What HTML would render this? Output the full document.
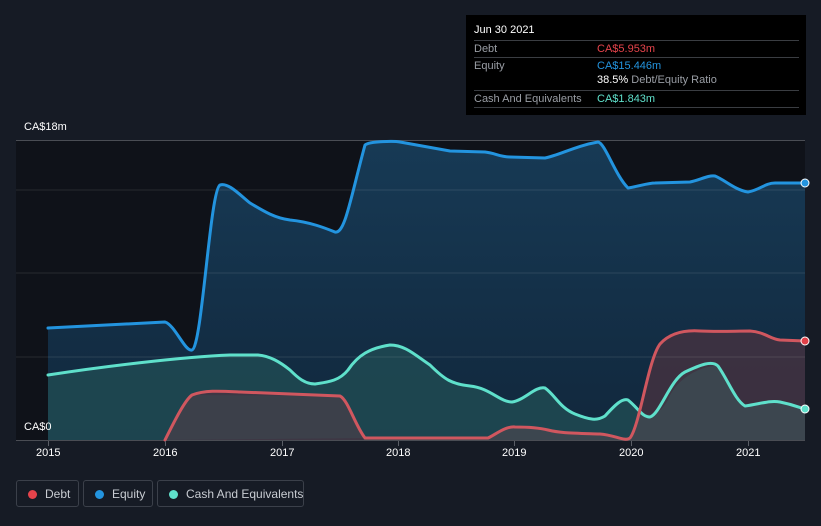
<!DOCTYPE html>
<html><head><meta charset="utf-8"><style>
body{margin:0;width:821px;height:526px;background:#161b25;font-family:"Liberation Sans",sans-serif;overflow:hidden;position:relative}
.t{position:absolute;color:#fff;font-size:11px}
.tip{position:absolute;left:466px;top:15px;width:340px;height:100px;background:#000;}
.row{position:absolute;left:8px;width:325px;border-top:1px solid #3a3d42;font-size:11px;color:#9a9ea5;white-space:nowrap}
.row span{position:absolute;left:123px}
.leg{position:absolute;top:480px;height:27px;border:1px solid #3b404a;border-radius:3px;color:#c8ccd2;font-size:12px;line-height:26px;box-sizing:border-box;white-space:nowrap}
.leg i{position:absolute;left:11px;top:9px;width:9px;height:9px;border-radius:50%}
</style></head><body>
<svg width="821" height="526" style="position:absolute;left:0;top:0">
<defs>
<linearGradient id="eg" x1="0" y1="0" x2="0" y2="1"><stop offset="0" stop-color="#173a55"/><stop offset="1" stop-color="#11273c"/></linearGradient>
</defs>
<rect x="16" y="141" width="789" height="299" fill="#0f1219"/>
<path d="M48,328 L165,322 C175,325 185,352 192,350 C202,348 210,190 220,185 C228,182 240,195 250,203 C265,212 275,218 290,220 C310,222 325,228 335,232 C345,234 350,200 365,145 C370,141 395,141 400,142 L450,151 L485,152 C495,153 500,157 510,157 L545,158 C560,155 575,146 598,142 C605,143 615,175 628,188 C640,186 648,183 655,183 L690,182 C700,180 708,175 715,176 C725,180 735,190 748,192 C760,190 765,183 775,183 L805,183 L805,440 L48,440Z" fill="url(#eg)"/>
<path d="M48,375 C100,367 180,357 230,355 L258,355 C270,356 280,362 290,370 C298,378 305,384 315,384 C330,382 340,380 348,370 C358,355 370,348 390,345 C405,345 415,355 430,365 C445,380 452,384 470,386 C490,388 500,402 512,402 C525,400 535,386 545,388 C555,395 560,408 575,414 C590,420 597,421 605,416 C615,405 622,398 628,400 C638,408 642,417 650,417 C660,414 670,380 685,372 C700,365 712,360 718,366 C728,380 735,400 745,406 C760,404 770,400 780,402 C795,405 800,408 805,409 L805,440 L48,440Z" fill="#204a52" fill-opacity="0.85"/>
<path d="M165,440 C175,420 185,400 192,395 C205,390 220,391 240,392 L340,396 C348,400 355,425 365,438 L488,438 C495,435 505,426 515,427 C530,427 540,428 548,430 C560,433 570,433 600,434 C615,435 625,442 630,438 C640,425 648,360 660,344 C670,333 685,330 700,331 C720,332 735,331 750,331 C765,332 770,339 780,340 L805,341 L805,440 Z" fill="#4a3340" fill-opacity="0.75"/>
<path d="M363,440 L365,438 L488,438 C495,435 505,426 515,427 C530,427 540,428 548,430 C560,433 570,433 600,434 C615,435 625,442 630,438 L640,412 C650,418 660,414 668,400 C675,380 700,365 718,366 C728,380 735,400 745,406 C760,404 770,400 780,402 L805,409 L805,440Z" fill="#3c4a52" fill-opacity="0.8"/>
<path d="M165,440 L190,395 L340,396 L365,438 Z" fill="#3c424c" fill-opacity="0.8"/>
<g stroke="#ffffff" stroke-opacity="0.1" stroke-width="1">
<line x1="16" y1="190" x2="805" y2="190"/><line x1="16" y1="273" x2="805" y2="273"/><line x1="16" y1="357" x2="805" y2="357"/>
</g>
<line x1="16" y1="140.5" x2="805" y2="140.5" stroke="#4a4d54"/>
<line x1="16" y1="440.5" x2="805" y2="440.5" stroke="#4a4d54"/>
<g fill="none" stroke-width="3" stroke-linejoin="round" stroke-linecap="round">
<path d="M48,328 L165,322 C175,325 185,352 192,350 C202,348 210,190 220,185 C228,182 240,195 250,203 C265,212 275,218 290,220 C310,222 325,228 335,232 C345,234 350,200 365,145 C370,141 395,141 400,142 L450,151 L485,152 C495,153 500,157 510,157 L545,158 C560,155 575,146 598,142 C605,143 615,175 628,188 C640,186 648,183 655,183 L690,182 C700,180 708,175 715,176 C725,180 735,190 748,192 C760,190 765,183 775,183 L805,183" stroke="#2394df"/>
<path d="M48,375 C100,367 180,357 230,355 L258,355 C270,356 280,362 290,370 C298,378 305,384 315,384 C330,382 340,380 348,370 C358,355 370,348 390,345 C405,345 415,355 430,365 C445,380 452,384 470,386 C490,388 500,402 512,402 C525,400 535,386 545,388 C555,395 560,408 575,414 C590,420 597,421 605,416 C615,405 622,398 628,400 C638,408 642,417 650,417 C660,414 670,380 685,372 C700,365 712,360 718,366 C728,380 735,400 745,406 C760,404 770,400 780,402 C795,405 800,408 805,409" stroke="#5fe0cb"/>
<path d="M165,440 C175,420 185,400 192,395 C205,390 220,391 240,392 L340,396 C348,400 355,425 365,438 L488,438 C495,435 505,426 515,427 C530,427 540,428 548,430 C560,433 570,433 600,434 C615,435 625,442 630,438 C640,425 648,360 660,344 C670,333 685,330 700,331 C720,332 735,331 750,331 C765,332 770,339 780,340 L805,341" stroke="#d0575f"/>
</g>
<circle cx="805" cy="183" r="4" fill="#2394df" stroke="#fff" stroke-width="1"/>
<circle cx="805" cy="341" r="4" fill="#e04048" stroke="#fff" stroke-width="1"/>
<circle cx="805" cy="409" r="4" fill="#5fe0cb" stroke="#fff" stroke-width="1"/>
<g stroke="#5a5e66"><line x1="48.5" y1="441" x2="48.5" y2="446"/><line x1="165.5" y1="441" x2="165.5" y2="446"/><line x1="282.5" y1="441" x2="282.5" y2="446"/><line x1="398.5" y1="441" x2="398.5" y2="446"/><line x1="514.5" y1="441" x2="514.5" y2="446"/><line x1="631.5" y1="441" x2="631.5" y2="446"/><line x1="748.5" y1="441" x2="748.5" y2="446"/></g>
</svg>
<div class="t" style="left:24px;top:121px">CA$18m</div>
<div class="t" style="left:24px;top:421px">CA$0</div>
<div class="t" style="left:36px;top:447px">2015</div>
<div class="t" style="left:153px;top:447px">2016</div>
<div class="t" style="left:270px;top:447px">2017</div>
<div class="t" style="left:386px;top:447px">2018</div>
<div class="t" style="left:502px;top:447px">2019</div>
<div class="t" style="left:619px;top:447px">2020</div>
<div class="t" style="left:736px;top:447px">2021</div>
<div class="tip">
<div style="position:absolute;left:8px;top:9px;color:#fff;font-size:11px">Jun 30 2021</div>
<div class="row" style="top:25px;height:16px;line-height:16px">Debt<span style="color:#e5434b">CA$5.953m</span></div>
<div class="row" style="top:42px;height:16px;line-height:16px">Equity<span style="color:#2394df">CA$15.446m</span></div>
<div style="position:absolute;left:131px;top:59px;font-size:11px;color:#9a9ea5;white-space:nowrap"><b style="color:#fff;font-weight:normal">38.5%</b> Debt/Equity Ratio</div>
<div class="row" style="top:75px;height:16px;line-height:16px">Cash And Equivalents<span style="color:#5fe0cb">CA$1.843m</span></div>
<div class="row" style="top:92px;height:0"></div>
</div>
<div class="leg" style="left:16px;width:63px"><i style="background:#e5434b"></i><span style="position:absolute;left:28px">Debt</span></div>
<div class="leg" style="left:83px;width:70px"><i style="background:#2394df"></i><span style="position:absolute;left:28px">Equity</span></div>
<div class="leg" style="left:157px;width:147px"><i style="background:#5fe0cb"></i><span style="position:absolute;left:28px">Cash And Equivalents</span></div>
</body></html>
